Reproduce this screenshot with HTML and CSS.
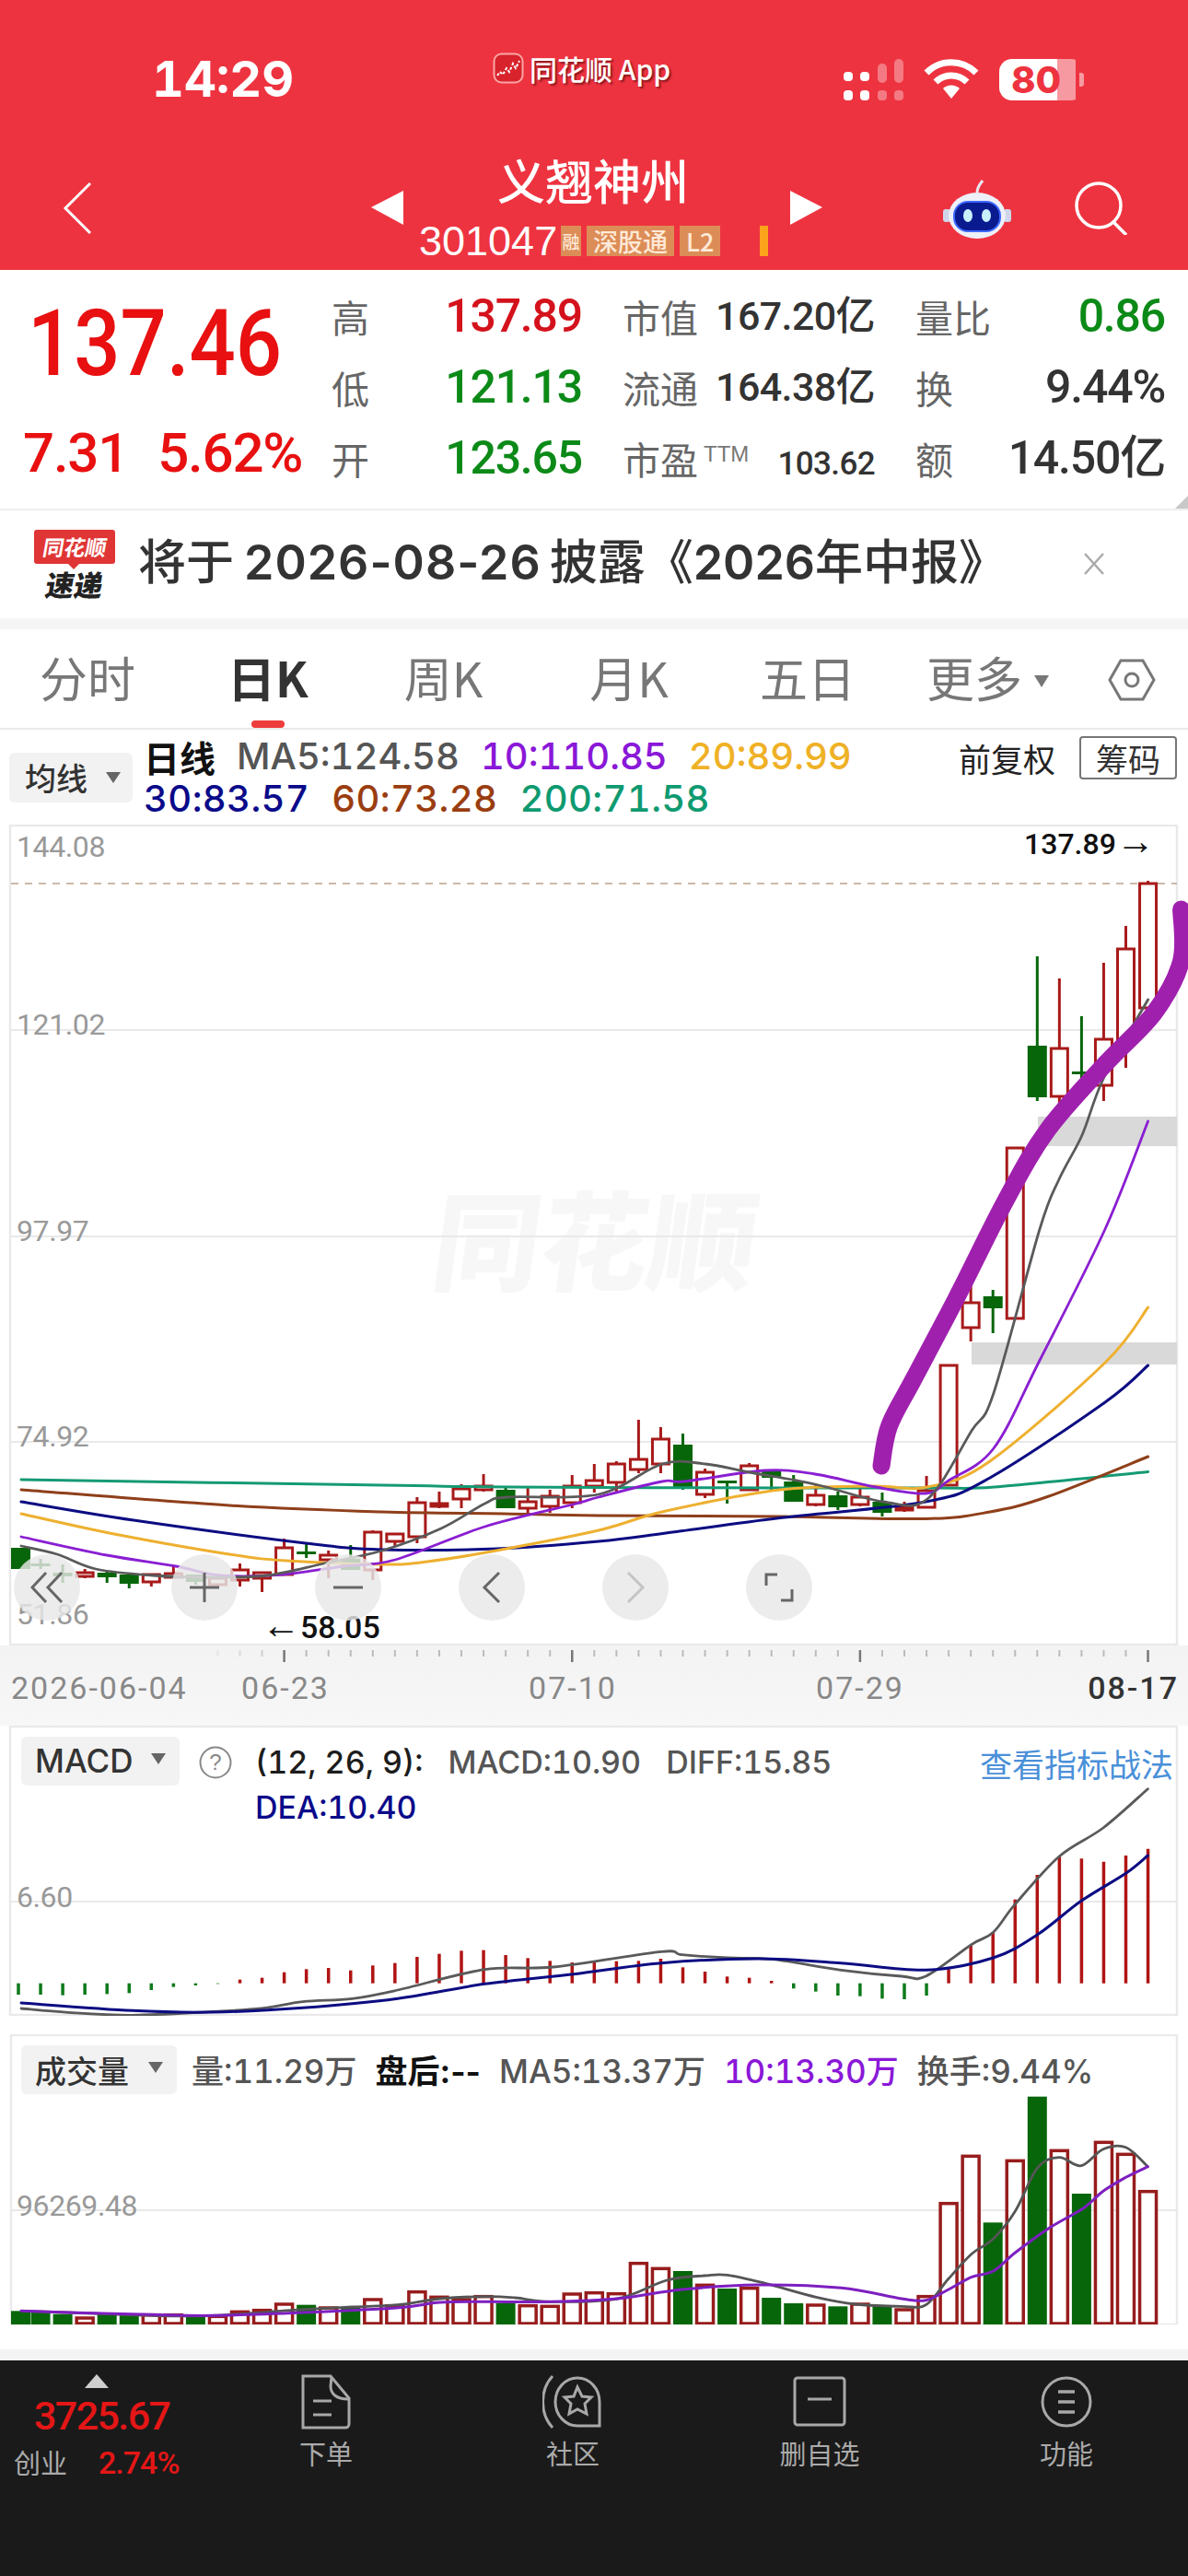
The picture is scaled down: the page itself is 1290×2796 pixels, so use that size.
FILE: index.html
```html
<!DOCTYPE html>
<html lang="zh-CN">
<head>
<meta charset="utf-8">
<title>义翘神州</title>
<link rel="stylesheet" href="styles.css">
</head>
<body>
<div class="page">
  <header class="app-header">
    <div class="status-bar">
      <span class="time">14:29</span>
      <div class="app-pill">
        <svg class="app-logo" viewBox="0 0 34 34"><rect x="1.5" y="1.5" width="31" height="31" rx="8" fill="#d9232c" stroke="#f9a6a6" stroke-width="2"/><path d="M5 25l3-4 3 3 4-7 3 4 4-9 3 5 4-8" fill="none" stroke="#fff" stroke-width="2" stroke-dasharray="3 2"/></svg>
        <span class="app-name">同花顺 App</span>
      </div>
      <div class="status-icons">
        <svg class="signal" viewBox="0 0 65 46"><g fill="#fff"><rect x="0" y="14" width="10" height="10" rx="4"/><rect x="0" y="34" width="10" height="11" rx="4"/><rect x="18" y="14" width="10" height="10" rx="4"/><rect x="18" y="34" width="10" height="11" rx="4"/></g><g fill="#fff" opacity=".35"><rect x="37" y="5" width="10" height="21" rx="5"/><rect x="37" y="34" width="10" height="11" rx="4"/><rect x="55" y="0" width="10" height="26" rx="5"/><rect x="55" y="34" width="10" height="11" rx="4"/></g></svg>
        <svg class="wifi" viewBox="0 0 60 44"><g fill="none" stroke="#fff" stroke-width="7"><path d="M3 15a38 38 0 0 1 54 0"/><path d="M13 25a24 24 0 0 1 34 0"/></g><path d="M21 32a13 13 0 0 1 18 0L30 43z" fill="#fff"/></svg>
        <div class="battery"><span>80</span></div>
      </div>
    </div>
    <div class="nav-row">
      <svg class="back-icon" viewBox="0 0 32 58"><path d="M30 2L3 29l27 27" fill="none" stroke="#fff" stroke-width="3"/></svg>
      <div class="stock-id">
        <svg class="arrow-tri" viewBox="0 0 35 37"><path d="M35 0v37L0 18z" fill="#fff"/></svg>
        <div class="stock-text">
          <div class="stock-name">义翘神州</div>
          <div class="stock-tags">
            <span class="stock-code">301047</span>
            <span class="tag tag-cut">融</span>
            <span class="tag">深股通</span>
            <span class="tag">L2</span>
            <span class="tag-bar"></span>
          </div>
        </div>
        <svg class="arrow-tri" viewBox="0 0 35 37"><path d="M0 0v37l35-19z" fill="#fff"/></svg>
      </div>
      <div class="nav-tools">
        <svg class="robot" viewBox="0 0 74 66"><path d="M37 16c0-6 3-9 6-13" fill="none" stroke="#e8e8f0" stroke-width="3"/><rect x="0" y="34" width="8" height="14" rx="3" fill="#cfd6ea"/><rect x="66" y="34" width="8" height="14" rx="3" fill="#cfd6ea"/><ellipse cx="37" cy="41" rx="31" ry="25" fill="#eef0f8"/><rect x="12" y="26" width="50" height="32" rx="15" fill="#0a1a8f" stroke="#3c68ff" stroke-width="2"/><ellipse cx="27" cy="41" rx="5" ry="7" fill="#c8f0fa"/><ellipse cx="47" cy="41" rx="5" ry="7" fill="#c8f0fa"/></svg>
        <svg class="search" viewBox="0 0 60 58"><circle cx="28" cy="26" r="24" fill="none" stroke="#fff" stroke-width="3.5"/><path d="M44 44l14 14" stroke="#fff" stroke-width="3.5"/></svg>
      </div>
    </div>
  </header>

  <section class="quote">
    <div class="quote-main">
      <div class="last-price"><span>137.46</span></div>
      <div class="change"><span>7.31</span><span>5.62%</span></div>
    </div>
    <div class="quote-grid">
      <span class="q-label">高</span><span class="q-val up">137.89</span>
      <span class="q-label col-b">市值</span><span class="q-mid">167.20亿</span>
      <span class="q-label col-c">量比</span><span class="q-val down">0.86</span>

      <span class="q-label">低</span><span class="q-val down">121.13</span>
      <span class="q-label col-b">流通</span><span class="q-mid">164.38亿</span>
      <span class="q-label col-c">换</span><span class="q-val dark">9.44%</span>

      <span class="q-label">开</span><span class="q-val down">123.65</span>
      <div class="q-pe-cell"><span class="q-label">市盈</span><span class="q-ttm">TTM</span><span class="q-mid q-small">103.62</span></div>
      <span class="q-label col-c">额</span><span class="q-val dark q-tight">14.50亿</span>
    </div>
    <span class="quote-corner"></span>
  </section>

  <section class="notice">
    <div class="notice-logo">
      <span class="logo-top"><span>同花顺</span></span>
      <span class="logo-bottom">速递</span>
    </div>
    <p class="notice-text"><span class="cjk">将于</span><span class="num num-date">2026-08-26</span><span class="cjk">披露《</span><span class="num">2026</span><span class="cjk">年中报》</span></p>
    <svg class="close-icon" viewBox="0 0 24 24"><path d="M2 1l20 22M22 1L2 23" stroke="#aaa" stroke-width="2.5" fill="none"/></svg>
  </section>
  <div class="divider"></div>

  <nav class="tabs">
    <span class="tab">分时</span>
    <span class="tab tab-active">日K</span>
    <span class="tab">周K</span>
    <span class="tab">月K</span>
    <span class="tab">五日</span>
    <span class="tab tab-more">更多</span>
    <svg class="hex-icon" viewBox="0 0 52 46"><path d="M14 2h24l12 21-12 21H14L2 23z" fill="none" stroke="#777" stroke-width="3"/><circle cx="26" cy="23" r="7" fill="none" stroke="#777" stroke-width="3"/></svg>
  </nav>

  <section class="kline-legend">
    <div class="dropdown dropdown-ma">均线</div>
    <div class="ma-values">
      <div class="ma-row"><b class="ma-title">日线</b><span class="c-gray">MA5:124.58</span><span class="c-purple">10:110.85</span><span class="c-yellow">20:89.99</span></div>
      <div class="ma-row ma-row-wide"><span class="c-navy">30:83.57</span><span class="c-brown">60:73.28</span><span class="c-teal">200:71.58</span></div>
    </div>
    <div class="legend-right">
      <span class="adjust">前复权</span>
      <span class="chip-btn">筹码</span>
    </div>
  </section>

  <section class="price-chart">
    <svg class="chart-svg price-svg" viewBox="0 895 1290 891">
      <rect class="frame" x="11" y="896" width="1267" height="889"/>
      <g transform="translate(465 1392) skewX(-8)"><text class="watermark" x="0" y="0">同花顺</text></g>
      <g id="price-marks"></g>
      <text class="axis-label" x="18" y="930">144.08</text>
      <text class="axis-label" x="18" y="1123">121.02</text>
      <text class="axis-label" x="18" y="1347">97.97</text>
      <text class="axis-label" x="18" y="1570">74.92</text>
      <text class="axis-label" x="18" y="1763">51.86</text>
      <text class="mark-label" x="1112" y="927">137.89<tspan class="mark-arrow">→</tspan></text>
      <text class="mark-label mark-low" x="284" y="1778"><tspan class="mark-arrow">←</tspan>58.05</text>
    </svg>
    <div class="zoom-controls">
      <span class="zoom-btn"><svg viewBox="0 0 36 36"><path d="M17 2L2 18l15 16M34 2L19 18l15 16" fill="none" stroke="#666" stroke-width="3"/></svg></span>
      <span class="zoom-btn"><svg viewBox="0 0 36 36"><path d="M18 2v32M2 18h32" fill="none" stroke="#666" stroke-width="3"/></svg></span>
      <span class="zoom-btn"><svg viewBox="0 0 36 36"><path d="M2 18h32" fill="none" stroke="#666" stroke-width="3"/></svg></span>
      <span class="zoom-btn"><svg viewBox="0 0 36 36"><path d="M26 2L10 18l16 16" fill="none" stroke="#666" stroke-width="3"/></svg></span>
      <span class="zoom-btn"><svg viewBox="0 0 36 36"><path d="M10 2l16 16-16 16" fill="none" stroke="#c4c4c4" stroke-width="3"/></svg></span>
      <span class="zoom-btn"><svg viewBox="0 0 36 36"><path d="M4 16V4h12M32 20v12H20" fill="none" stroke="#666" stroke-width="3"/></svg></span>
    </div>
  </section>

  <section class="time-axis">
    <svg class="ticks" viewBox="0 0 1290 24"><g id="tick-marks"></g></svg>
    <div class="dates">
      <span class="date d1">2026-06-04</span>
      <span class="date">06-23</span>
      <span class="date">07-10</span>
      <span class="date">07-29</span>
      <span class="date d5">08-17</span>
    </div>
  </section>

  <section class="panel macd-panel">
    <svg class="chart-svg macd-svg" viewBox="0 1873 1290 315">
      <rect class="frame" x="11" y="1874" width="1267" height="313"/>
      <g id="macd-marks"></g>
      <text class="axis-label" x="18" y="2070">6.60</text>
    </svg>
    <div class="panel-legend macd-legend">
      <div class="dropdown dropdown-macd">MACD</div>
      <svg class="help-icon" viewBox="0 0 36 36"><circle cx="18" cy="18" r="16.5" fill="none" stroke="#888" stroke-width="2"/><text class="help-mark" x="18" y="26">?</text></svg>
      <div class="macd-values">
        <div class="macd-row"><span class="c-dark">(12, 26, 9):</span><span class="c-gray">MACD:10.90</span><span class="c-gray">DIFF:15.85</span></div>
        <div class="macd-row"><span class="c-navy">DEA:10.40</span></div>
      </div>
      <a class="strategy-link">查看指标战法</a>
    </div>
  </section>

  <section class="panel volume-panel">
    <svg class="chart-svg volume-svg" viewBox="0 2208 1290 315">
      <path class="frame-open" d="M12 2523V2209H1278V2523"/>
      <g id="volume-marks"></g>
      <text class="axis-label" x="18" y="2405">96269.48</text>
    </svg>
    <div class="panel-legend volume-legend">
      <div class="dropdown dropdown-vol">成交量</div>
      <div class="vol-values">
        <span class="c-gray">量:11.29万</span>
        <b class="c-black">盘后:--</b>
        <span class="c-gray">MA5:13.37万</span>
        <span class="c-purple">10:13.30万</span>
        <span class="c-gray">换手:9.44%</span>
      </div>
    </div>
  </section>

  <div class="foot-gap"></div>

  <footer class="bottom-bar">
    <div class="index-box">
      <span class="index-arrow"></span>
      <span class="index-value">3725.67</span>
      <div class="index-row"><span class="index-name">创业</span><span class="index-pct">2.74%</span></div>
    </div>
    <div class="nav-item">
      <svg viewBox="0 0 66 60"><g fill="none" stroke="#a8a8a8" stroke-width="3"><path d="M8 2h30l20 24v28a4 4 0 0 1-4 4H8z"/><path d="M39 3l-1 10c0 8 6 14 19 14"/><path d="M19 29h20M19 44h20"/></g></svg>
      <span>下单</span>
    </div>
    <div class="nav-item">
      <svg viewBox="0 0 66 60"><g fill="none" stroke="#a8a8a8" stroke-width="3"><path d="M11 2C-3 17-3 43 11 58"/><path d="M62 56H38a24 26 0 1 1 24-26z"/><path d="M38 14l5 10 10 1-7 7 2 11-10-5-9 5 2-11-7-7 10-1z"/></g></svg>
      <span>社区</span>
    </div>
    <div class="nav-item">
      <svg viewBox="0 0 66 60"><g fill="none" stroke="#a8a8a8" stroke-width="3"><rect x="6" y="4" width="54" height="51" rx="3"/></g><path d="M20 27h26" stroke="#a8a8a8" stroke-width="3"/></svg>
      <span>删自选</span>
    </div>
    <div class="nav-item">
      <svg viewBox="0 0 66 60"><circle cx="33" cy="30" r="26" fill="none" stroke="#a8a8a8" stroke-width="3"/><path d="M24 19h18M24 30h18M24 41h18" stroke="#a8a8a8" stroke-width="3.5"/></svg>
      <span>功能</span>
    </div>
  </footer>
</div>
<script src="chart.js"></script>
</body>
</html>
```
FILE: styles.css
```css
* { box-sizing: border-box; }
html, body { margin: 0; padding: 0; background: #fff; }
body { font-family: "Liberation Sans", "Noto Sans CJK SC", sans-serif; }
.page { width: 1290px; height: 2796px; overflow: hidden; display: flex; flex-direction: column; }

/* header */
.app-header { height: 293px; background: #ee3340; color: #fff; flex: none; }
.status-bar { height: 165px; display: flex; align-items: flex-start; }
.time { font: 700 54px/56px "Inter", sans-serif; margin: 58px 0 0 165px; width: 370px; font-variant-numeric: tabular-nums; }
.app-pill { display: flex; align-items: center; width: 381px; margin-top: 57px; }
.app-logo { width: 34px; height: 34px; margin-right: 6px; }
.app-name { font: 500 30px/34px "Noto Sans CJK SC", sans-serif; text-shadow: 2px 2px 2px rgba(60,0,0,.55); }
.status-icons { display: flex; align-items: flex-start; margin-top: 64px; }
.signal { width: 65px; height: 46px; }
.wifi { width: 60px; height: 44px; margin-left: 22px; }
.battery { width: 92px; height: 45px; margin-left: 22px; border-radius: 14px; background: linear-gradient(90deg, #fff 0 68%, rgba(255,255,255,.5) 68% 90%, transparent 90%); padding-left: 13px; position: relative; }
.battery::after { content: ""; position: absolute; right: 0; top: 15px; width: 5px; height: 15px; border-radius: 0 3px 3px 0; background: rgba(255,255,255,.5); }
.battery span { font: 800 40px/45px "Inter", sans-serif; color: #ee3340; }
.nav-row { height: 128px; display: grid; grid-template-columns: 335px 490px 1fr; padding-left: 68px; }
.back-icon { width: 32px; height: 58px; margin-top: 32px; }
.stock-id { display: flex; align-items: flex-start; }
.arrow-tri { width: 35px; height: 37px; margin-top: 42px; flex: none; }
.stock-text { width: 420px; }
.stock-name { font: 500 52px/60px "Noto Sans CJK SC", sans-serif; text-align: center; margin-left: -8px; }
.stock-tags { display: flex; align-items: center; height: 33px; margin-top: 20px; padding-left: 17px; }
.stock-code { font: 400 45px/33px "Liberation Sans", sans-serif; width: 154px; }
.tag { background: #dc8d57; color: #ffe9d8; font: 500 27px/33px "Noto Sans CJK SC", sans-serif; padding: 0 7px; margin-right: 6px; height: 33px; white-space: nowrap; }
.tag-cut { width: 22px; padding: 0; font-size: 19px; text-align: center; }
.tag-bar { width: 9px; height: 33px; background: #fca31c; margin-left: 37px; }
.nav-tools { display: flex; align-items: flex-start; padding-left: 131px; }
.robot { width: 74px; height: 66px; margin-top: 28px; }
.search { width: 60px; height: 58px; margin: 32px 0 0 67px; }

/* quote */
.quote { height: 259px; position: relative; display: flex; flex: none; font-family: "Roboto", "Noto Sans CJK SC", sans-serif; font-weight: 500; }
.quote-main { width: 360px; flex: none; color: #e81010; }
.last-price { height: 151px; padding: 30px 0 0 30px; font-size: 100px; line-height: 100px; }
.last-price span { display: inline-block; transform: scaleX(.885); transform-origin: left center; }
.change { display: flex; gap: 32px; padding-left: 25px; font-size: 60px; line-height: 96px; letter-spacing: -1.2px; }
.quote-grid { display: grid; grid-template-columns: 60px 212px 44px 90px 184px 44px 100px 171px; grid-template-rows: repeat(3, 77px); padding-top: 12px; }
.col-b { grid-column: 4; }
.col-c { grid-column: 7; }
.q-label { font: 400 41px/77px "Noto Sans CJK SC", sans-serif; color: #666; }
.q-val, .q-mid { text-align: right; white-space: nowrap; }
.q-val { font-size: 50px; line-height: 77px; letter-spacing: -1.2px; }
.q-mid { font-size: 43px; line-height: 77px; color: #333; letter-spacing: -.6px; grid-column: 5; }
.q-pe-cell { grid-column: 4 / span 2; display: flex; align-items: baseline; }
.q-ttm { font: 300 24px/1 "Liberation Sans", sans-serif; color: #777; margin: 0 0 0 6px; position: relative; top: -14px; }
.q-small { font-size: 35px; margin-left: auto; }
.q-tight { font-size: 50px; letter-spacing: -1.2px; }
.up { color: #d4121c; }
.down { color: #0c8a18; }
.dark { color: #333; }
.quote-corner { position: absolute; right: 0; bottom: 0; border-style: solid; border-width: 0 0 14px 14px; border-color: transparent transparent #c8c8c8 transparent; }

/* notice */
.notice { height: 119px; border-top: 2px solid #eee; display: flex; align-items: flex-start; flex: none; }
.notice-logo { width: 88px; margin: 21px 0 0 37px; display: flex; flex-direction: column; align-items: center; flex: none; }
.logo-top { width: 88px; height: 37px; background: #e03535; color: #fff; border-radius: 3px; text-align: center; position: relative; font: 700 23px/37px "Noto Sans CJK SC", sans-serif; }
.logo-top span { display: inline-block; transform: skewX(-10deg); }
.logo-top::after { content: ""; position: absolute; left: 36px; top: 36px; border-style: solid; border-width: 7px 7px 0 7px; border-color: #e03535 transparent transparent transparent; }
.logo-bottom { font: 900 31px/34px "Noto Sans CJK SC", sans-serif; color: #222; transform: skewX(-10deg); margin-top: 5px; }
.notice-text { margin: 22px 0 0 25px; font-size: 52px; line-height: 62px; color: #333; white-space: nowrap; width: 1022px; flex: none; }
.notice-text .cjk { font: 500 52px/62px "Noto Sans CJK SC", sans-serif; }
.notice-text .num { font: 600 52px/62px "Inter", sans-serif; }
.notice-text .num-date { margin: 0 9px 0 11px; letter-spacing: 1px; }
.close-icon { width: 24px; height: 24px; margin: 46px 0 0 4px; flex: none; }
.divider { height: 12px; background: #f5f5f5; flex: none; }

/* tabs */
.tabs { height: 109px; border-bottom: 2px solid #eaeaea; display: flex; align-items: flex-start; padding: 22px 0 0 43px; flex: none; position: relative; }
.tab { font: 400 52px/60px "Noto Sans CJK SC", sans-serif; color: #777; flex: none; }
.tab:nth-child(2) { margin-left: 100px; }
.tab:nth-child(3) { margin-left: 104px; }
.tab:nth-child(4) { margin-left: 116px; }
.tab:nth-child(5) { margin-left: 99px; }
.tab:nth-child(6) { margin-left: 77px; }
.tab-active { color: #333; font-weight: 700; position: relative; }
.tab-active::after { content: ""; position: absolute; left: 26px; top: 77px; width: 36px; height: 8px; border-radius: 4px; background: #ee3b3b; }
.tab-more { position: relative; }
.tab-more::after { content: ""; position: absolute; left: 117px; top: 28px; border-style: solid; border-width: 13px 8px 0 8px; border-color: #777 transparent transparent transparent; }
.hex-icon { width: 52px; height: 46px; margin: 10px 0 0 93px; flex: none; }

/* legend */
.kline-legend { height: 103px; display: flex; align-items: flex-start; padding: 0 12px 0 10px; flex: none; }
.dropdown { background: #f2f2f2; border-radius: 6px; color: #333; position: relative; flex: none; }
.dropdown::after { content: ""; position: absolute; top: 21px; border-style: solid; border-width: 12px 8px 0 8px; border-color: #666 transparent transparent transparent; }
.dropdown-ma { width: 134px; height: 54px; margin-top: 25px; padding-left: 17px; font: 500 34px/54px "Noto Sans CJK SC", sans-serif; }
.dropdown-ma::after { right: 13px; }
.ma-values { margin-left: 12px; padding-top: 6px; font: 500 40px/46px "Inter", "Noto Sans CJK SC", sans-serif; font-variant-numeric: tabular-nums; }
.ma-row { display: flex; gap: 23px; white-space: nowrap; }
.ma-row-wide { gap: 24px; letter-spacing: .4px; }
.ma-title { font: 700 39px/46px "Noto Sans CJK SC", sans-serif; color: #111; }
.c-gray { color: #555; }
.c-purple { color: #8a18d8; }
.c-yellow { color: #efb126; }
.c-navy { color: #0a0a8a; }
.c-brown { color: #9a3d10; }
.c-teal { color: #0f9a70; }
.c-dark { color: #1c1c1c; }
.c-black { color: #111; }
.legend-right { margin-left: auto; display: flex; align-items: center; gap: 26px; margin-top: 7px; }
.adjust { font: 400 35px/47px "Noto Sans CJK SC", sans-serif; color: #222; }
.chip-btn { width: 106px; height: 47px; border: 2px solid #777; border-radius: 4px; text-align: center; font: 400 35px/43px "Noto Sans CJK SC", sans-serif; color: #333; }

/* charts */
.price-chart { height: 891px; position: relative; flex: none; }
.chart-svg { display: block; width: 1290px; }
.price-svg { height: 891px; }
.macd-svg, .volume-svg { height: 315px; }
.frame { fill: #fff; stroke: #e9e9e9; stroke-width: 2.5; }
.frame-open { fill: #fff; stroke: #eaeaea; stroke-width: 2.5; }
.watermark { font: 900 117px/1 "Noto Sans CJK SC", sans-serif; fill: #f7f7f7; }
.axis-label { font: 400 32px "Roboto", sans-serif; fill: #999; letter-spacing: -.4px; }
.mark-label { font: 500 32px "Roboto", sans-serif; fill: #111; }
.mark-low { font-size: 34px; }
.mark-arrow { font: 300 42px "Liberation Sans", sans-serif; }
.zoom-controls { position: absolute; left: 15px; top: 792px; display: flex; gap: 84px; }
.zoom-btn { width: 72px; height: 72px; border-radius: 50%; background: rgba(232,232,232,.82); display: flex; align-items: center; justify-content: center; }
.zoom-btn:first-child { margin-right: 15px; }
.zoom-btn svg { width: 36px; height: 36px; }

/* axis */
.time-axis { height: 87px; background: linear-gradient(180deg, #f3f3f3, #f7f7f7); flex: none; }
.ticks { display: block; width: 1290px; height: 24px; }
.dates { display: flex; margin-top: 2px; font: 400 34px/40px "Roboto", sans-serif; color: #888; letter-spacing: 2px; white-space: nowrap; }
.date { flex: none; width: 312px; text-align: center; }
.d1 { width: 154px; padding-left: 12px; text-align: left; }
.d5 { width: 190px; text-align: right; color: #333; font-weight: 500; }

/* lower panels */
.panel { position: relative; flex: none; height: 315px; }
.panel-legend { position: absolute; left: 0; top: 0; width: 1290px; display: flex; align-items: flex-start; }
.dropdown-macd, .dropdown-vol { height: 53px; margin: 12px 0 0 23px; font: 500 35px/53px "Inter", "Noto Sans CJK SC", sans-serif; padding-left: 15px; }
.dropdown-macd { width: 172px; }
.dropdown-macd::after { right: 15px; top: 18px; }
.dropdown-vol { width: 169px; font-family: "Noto Sans CJK SC", sans-serif; font-size: 34px; }
.dropdown-vol::after { right: 15px; top: 18px; }
.help-icon { width: 36px; height: 36px; margin: 22px 0 0 21px; flex: none; }
.help-mark { font: 400 24px "Liberation Sans", sans-serif; fill: #888; text-anchor: middle; }
.macd-values { margin: 15px 0 0 25px; font: 500 34px/49px "Inter", "Noto Sans CJK SC", sans-serif; font-variant-numeric: tabular-nums; }
.macd-row { display: flex; gap: 27px; white-space: nowrap; }
.strategy-link { position: absolute; left: 1064px; top: 18px; font: 400 35px/46px "Noto Sans CJK SC", sans-serif; color: #4a90d9; white-space: nowrap; }
.macd-panel { margin-bottom: 20px; }
.vol-values { display: flex; gap: 20px; margin: 16px 0 0 16px; font: 500 35px/48px "Inter", "Noto Sans CJK SC", sans-serif; white-space: nowrap; font-variant-numeric: tabular-nums; }
.vol-values b { font-weight: 700; font-variant-numeric: normal; }

.foot-gap { height: 39px; flex: none; background: linear-gradient(180deg, #fff 0 27px, #f4f4f4 27px); }

/* bottom bar */
.bottom-bar { height: 234px; flex: none; background: #1a1a1a; display: grid; grid-template-columns: 220px repeat(4, 268px); align-content: start; }
.index-box { display: flex; flex-direction: column; position: relative; padding: 15px 0 0 15px; font-family: "Roboto", "Noto Sans CJK SC", sans-serif; font-weight: 500; }
.index-arrow { width: 0; height: 0; margin-left: 77px; border-style: solid; border-width: 0 13px 15px 13px; border-color: transparent transparent #cfcfcf transparent; }
.index-value { font-size: 43px; line-height: 44px; color: #e51616; margin: 8px 0 0 22px; letter-spacing: -1.6px; }
.index-row { display: flex; align-items: baseline; margin-top: 8px; }
.index-name { font: 400 29px/40px "Noto Sans CJK SC", sans-serif; color: #aaa; width: 92px; }
.index-pct { font-size: 34px; line-height: 40px; color: #e51616; letter-spacing: -1px; }
.nav-item { display: flex; flex-direction: column; align-items: center; padding-top: 15px; }
.nav-item svg { width: 66px; height: 60px; }
.nav-item span { font: 400 29px/34px "Noto Sans CJK SC", sans-serif; color: #aaa; margin-top: 8px; }
```
FILE: chart.js
```js
const X = i => 20 + 24.05 * i;
const RED = '#a81a1a', GREEN = '#066609';

function smooth(pts) {
  let d = 'M' + pts[0][0] + ' ' + pts[0][1];
  for (let i = 0; i < pts.length - 1; i++) {
    const p0 = pts[Math.max(i - 1, 0)], p1 = pts[i], p2 = pts[i + 1], p3 = pts[Math.min(i + 2, pts.length - 1)];
    const c1 = [p1[0] + (p2[0] - p0[0]) / 6, p1[1] + (p2[1] - p0[1]) / 6];
    const c2 = [p2[0] - (p3[0] - p1[0]) / 6, p2[1] - (p3[1] - p1[1]) / 6];
    d += 'C' + [c1[0], c1[1], c2[0], c2[1], p2[0], p2[1]].map(n => n.toFixed(1)).join(' ');
  }
  return d;
}
const line = (pts, color, w) => `<path d="${smooth(pts)}" fill="none" stroke="${color}" stroke-width="${w}" stroke-linecap="round"/>`;
const hline = (y, x2 = 1278) => `<path d="M12 ${y}H${x2}" stroke="#e9e9e9" stroke-width="2"/>`;

/* price panel */
const candles = [
['g',1680,1680,1703,1703],['g',1692,1697,1700,1703],['g',1698,1707,1711,1718],['r',1703,1707,1711,1713],
['g',1706,1707,1712,1718],['g',1709,1709,1719,1724],['r',1709,1709,1717,1722],['r',1700,1708,1712,1712],
['g',1709,1709,1717,1720],['r',1713,1713,1720,1722],['r',1697,1704,1715,1722],['r',1707,1707,1713,1728],
['r',1670,1680,1709,1709],['g',1675,1684,1687,1691],['r',1683,1688,1693,1713],['g',1677,1692,1704,1704],
['r',1661,1663,1704,1715],['r',1665,1665,1673,1679],['r',1625,1631,1668,1675],['r',1619,1632,1635,1637],
['r',1611,1616,1627,1637],['r',1600,1613,1617,1619],['g',1615,1617,1637,1637],['r',1615,1630,1637,1642],
['r',1617,1624,1635,1642],['r',1601,1613,1631,1637],['r',1589,1607,1613,1620],['r',1586,1589,1609,1619],
['r',1541,1584,1595,1599],['r',1549,1562,1589,1599],['g',1556,1568,1616,1617],['r',1594,1598,1622,1626],
['g',1607,1607,1610,1632],['r',1588,1591,1617,1617],['g',1595,1597,1604,1618],['g',1601,1608,1630,1630],
['r',1612,1623,1633,1635],['g',1619,1623,1636,1639],['r',1614,1625,1633,1635],['g',1620,1630,1642,1646],
['r',1630,1636,1639,1641],['r',1602,1618,1636,1636],['r',1482,1482,1612,1612],['r',1387,1414,1441,1456],
['g',1400,1407,1420,1447],['r',1246,1246,1431,1431],['g',1038,1135,1191,1195],['r',1062,1138,1190,1201],
['g',1103,1163,1166,1170],['r',1045,1128,1178,1195],['r',1005,1030,1130,1159],['r',956,959,1094,1094]];

let s = hline(1118) + hline(1342) + hline(1565);
s += '<path d="M12 959H1278" stroke="#cdb9a8" stroke-width="2" stroke-dasharray="8 7"/>';
s += '<path d="M1127 1212H1278V1244H1127z" fill="#d9d9d9"/>';
s += '<path d="M1055 1457H1278V1481H1055z" fill="#d9d9d9"/>';
candles.forEach((c, i) => {
  const x = X(i), col = c[0] === 'r' ? RED : GREEN;
  s += `<path d="M${x} ${c[1]}V${c[4]}" stroke="${col}" stroke-width="3"/>`;
  if (c[0] === 'r') s += `<rect x="${x - 9}" y="${c[2]}" width="18" height="${c[3] - c[2]}" fill="#fff" stroke="${col}" stroke-width="3"/>`;
  else s += `<rect x="${Math.max(x - 10.5, 12)}" y="${c[2]}" width="21" height="${Math.max(c[3] - c[2], 3)}" fill="${col}"/>`;
});
s += line([[23,1606],[415,1612],[551,1614],[847,1615],[1013,1615],[1080,1614],[1246.6,1597.5]], '#149a74', 3);
s += line([[23,1617],[249,1634],[415,1641],[547,1643],[650,1645],[847,1646],[1005,1648.5],[1075,1641],[1137.5,1624.5],[1246.6,1581]], '#8f3f1a', 3);
s += line([[23,1630],[145,1650],[332,1675],[415,1682],[539,1681],[650,1673],[723,1664],[847,1647.5],[1005,1630],[1075,1604],[1200,1522],[1246.6,1482]], '#0c0c82', 3);
s += line([[23,1643],[124,1665],[249,1687],[311,1694],[415,1698],[464,1695],[539,1683],[650,1661],[723,1640],[847,1617],[947,1613],[1007,1614],[1075,1586],[1200,1479],[1246.6,1419]], '#eeb030', 3);
s += line([[23,1668],[116,1688],[191,1700],[240,1710],[307,1709],[373,1700],[429,1693],[526.5,1657],[622,1633],[650,1625],[719,1608],[743,1608],[831,1596],[885,1600],[951,1614],[1005,1621],[1030,1607],[1079,1572],[1129,1476.5],[1200,1334],[1246.6,1217]], '#8a1ed2', 2.8);
s += line([[23,1678],[62,1687],[104,1703],[166,1710],[232,1712],[290,1710],[352,1697],[415,1683],[479,1659],[526.5,1632],[551,1625],[650,1622],[719,1589],[766,1589],[814,1598],[885,1611],[959,1630],[1007,1627],[1055,1553],[1079,1512],[1129,1334],[1150,1280],[1175,1232],[1198.5,1170],[1246.6,1085]], '#5a5a5a', 2.8);
s += line([[957,1591],[965.5,1548],[992,1497],[1038,1410],[1092,1303],[1137.5,1226.5],[1200,1155],[1253.6,1099],[1282.6,1043],[1282.6,987]], '#a020ae', 19);
document.getElementById('price-marks').innerHTML = s;

/* ticks */
let t = '';
for (let i = 9; i < 52; i++) {
  const major = (i - 12) % 13 === 0;
  const op = i < 12 ? (0.25 + (i - 9) * 0.2).toFixed(2) : 1;
  t += `<path d="M${X(i)} 5V${major ? 18 : 12}" stroke="${major ? '#777' : '#bbb'}" stroke-width="${major ? 2.5 : 2}" opacity="${op}"/>`;
}
document.getElementById('tick-marks').innerHTML = t;

/* macd */
const my = z => 1860 + z / 3;
const mx = z => z / 1.2155;
const macdBars = [915,915,917,915,913,910,900,890,885,880,866,860,842,832,828,836,820,812,792,782,772,770,786,796,805,810,810,806,805,798,826,840,856,860,870,895,905,918,920,928,930,918,832,755,712,605,525,465,472,482,462,440];
let m = hline(2064);
macdBars.forEach((z, i) => {
  const col = z > 878 ? '#0d7a1a' : '#b01414';
  m += `<path d="M${X(i)} ${my(878)}V${my(z)}" stroke="${col}" stroke-width="3.5"/>`;
});
const mp = a => a.map(p => [mx(p[0]), my(p[1])]);
m += line(mp([[28,960],[90,973],[175,982],[280,970],[345,960],[400,938],[465,928],[525,900],[640,833],[730,825],[873,775],[900,785],[960,795],[1020,800],[1110,835],[1190,855],[1222,855],[1282,752],[1311,712],[1340,620],[1398,465],[1456,372],[1515,245]]), '#5a5a5a', 2.8);
m += line(mp([[28,942],[175,967],[280,972],[400,958],[525,928],[640,880],[757,848],[873,812],[1000,798],[1110,812],[1222,835],[1311,795],[1369,720],[1427,610],[1486,520],[1515,462]]), '#0c0c82', 3);
document.getElementById('macd-marks').innerHTML = m;

/* volume */
const vy = z => 2200 + z / 3;
const base = 2522;
const vols = [['g',925],['g',930],['g',935],['r',945],['g',935],['g',935],['r',935],['r',935],['g',938],['r',940],['r',925],['r',920],['r',900],['g',905],['r',912],['g',915],['r',885],['r',905],['r',860],['r',877],['r',885],['r',875],['g',900],['r',905],['r',907],['r',867],['r',863],['r',866],['r',767],['r',784],['g',795],['r',838],['g',852],['r',848],['g',882],['g',900],['r',903],['g',910],['r',900],['g',908],['r',918],['r',875],['r',572],['r',418],['g',637],['r',433],['g',227],['r',400],['g',543],['r',373],['r',412],['r',533]];
let v = hline(2399);
v += `<path d="M12 2523H1278" stroke="#e4e4e4" stroke-width="2"/>`;
vols.forEach((b, i) => {
  const x = X(i), y = vy(b[1]);
  if (b[0] === 'r') v += `<rect x="${x - 9}" y="${y + 1}" width="18" height="${base - y - 1}" fill="#fff" stroke="#971c1c" stroke-width="3.5"/>`;
  else v += `<rect x="${Math.max(x - 10.5, 12)}" y="${y}" width="21" height="${base + 1.5 - y}" fill="${GREEN}"/>`;
});
const vp = a => a.map(p => [mx(p[0]), vy(p[1])]);
v += line(vp([[28,925],[90,930],[200,940],[280,940],[400,920],[465,912],[525,905],[581,885],[640,878],[680,882],[727,895],[815,885],[880,825],[930,810],[960,808],[1010,835],[1077,880],[1130,903],[1190,910],[1222,905],[1252,820],[1282,740],[1311,690],[1340,600],[1369,460],[1398,425],[1427,452],[1456,398],[1486,392],[1515,455]]), '#555', 2.8);
v += line(vp([[28,925],[90,930],[200,937],[280,940],[400,930],[523,915],[581,897],[640,895],[727,895],[815,885],[900,855],[1000,840],[1110,850],[1190,885],[1222,890],[1252,855],[1282,815],[1311,795],[1340,735],[1385,655],[1430,590],[1456,535],[1486,490],[1515,455]]), '#7d1fc0', 3);
document.getElementById('volume-marks').innerHTML = v;
```
